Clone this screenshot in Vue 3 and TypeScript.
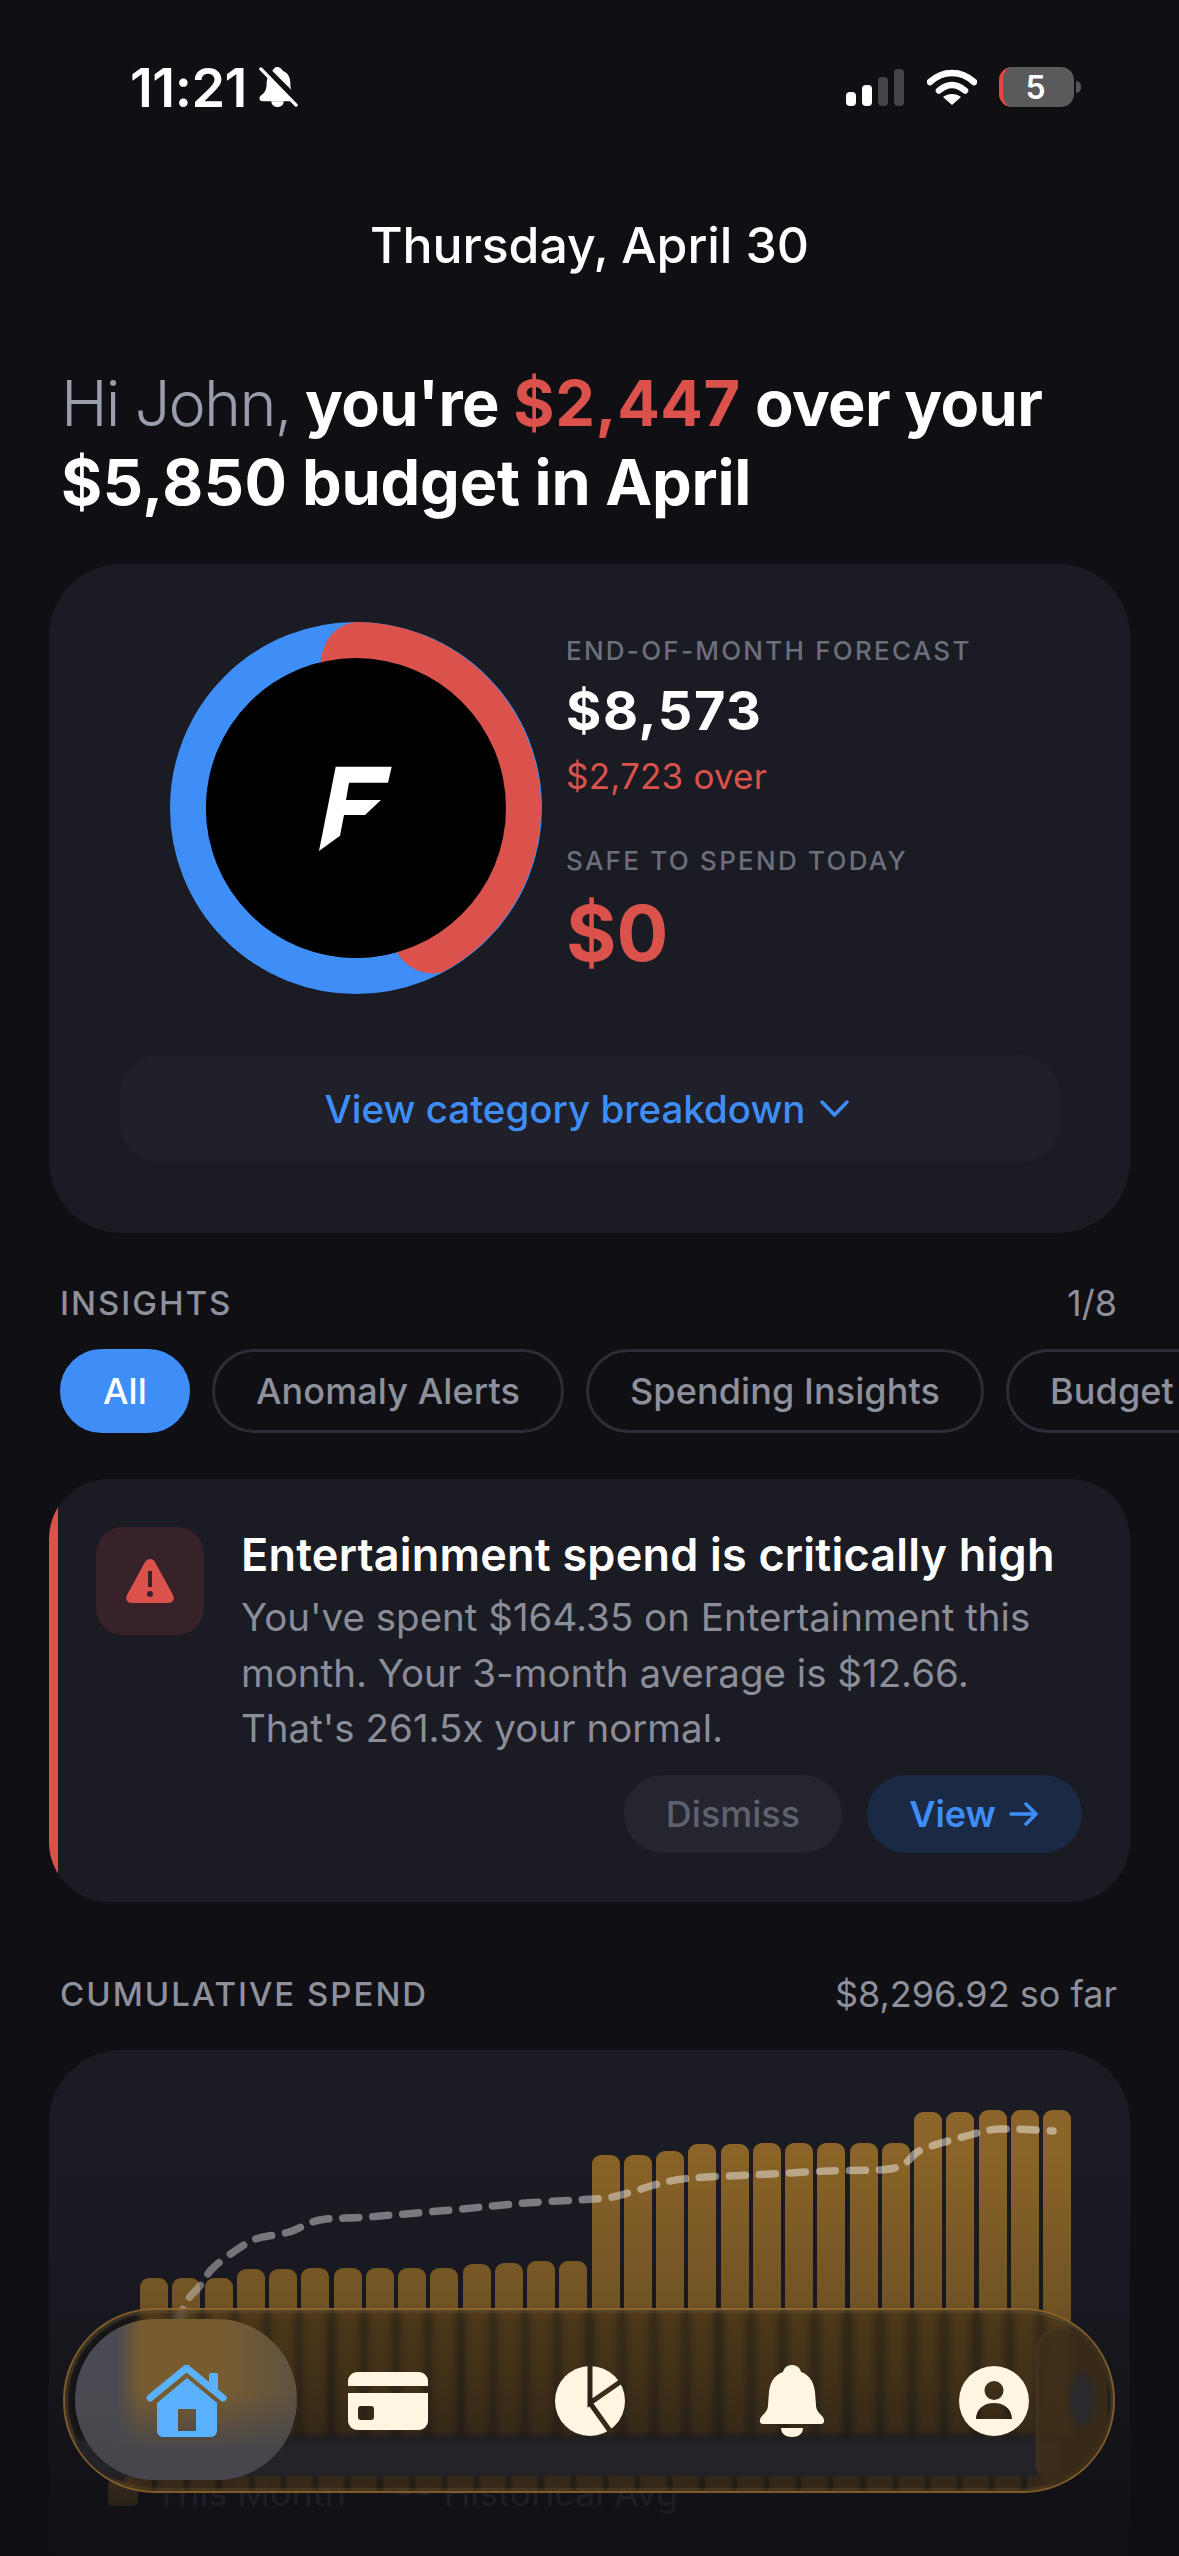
<template>
  <div class="page">
    <header class="status">
      <div class="status-left">
        <span class="time">11:21</span>
        <svg class="mute" width="40" height="44" viewBox="0 0 42 44">
          <path d="M20 1c3 0 5 2 6 4 7 3 8 9 8 14 0 6 2 9 5 12 3 2 2 6-1 6H5c-3 0-5-3-2-6 4-3 6-6 6-12 0-5 2-11 6-14 1-2 3-4 5-4Z" fill="#fff" />
          <path d="M14 37h13c0 4-3 6-6.500 6S14 41 14 37Z" fill="#fff" />
          <path d="M-2 0 38 40" stroke="#0f0f14" stroke-width="7" transform="translate(4 -3)" />
          <path d="M3 3 40 41" stroke="#fff" stroke-width="3.500" stroke-linecap="round" />
        </svg>
      </div>
      <div class="status-right">
        <div class="signal">
          <i v-for="(bar, n) in signalBars" :key="n" :class="{ off: n > 1 }" :style="{ height: bar + 'px' }"></i>
        </div>
        <svg class="wifi" width="50" height="38" viewBox="0 0 50 38">
          <path d="M3 14C16 2 34 2 47 14" fill="none" stroke="#fff" stroke-width="6.500" stroke-linecap="round" />
          <path d="M12 22.500C20 15 30 15 38 22.500" fill="none" stroke="#fff" stroke-width="6.500" stroke-linecap="round" />
          <path d="M25 37 16 29c5-4 13-4 18 0Z" fill="#fff" />
        </svg>
        <div class="battery"><span>5</span></div>
        <i class="nub"></i>
      </div>
    </header>

    <div class="date">Thursday, April 30</div>

    <h1 class="headline">
      <span class="hi">Hi John,</span> you're <span class="red num">$2,447</span> over your<br /><span class="num">$5,850</span> <span class="tail">budget in April</span>
    </h1>

    <section class="card summary">
      <div class="summary-top">
        <div class="ring">
          <svg width="372" height="372" viewBox="0 0 372 372">
            <circle cx="186" cy="186" r="168" fill="none" stroke="#3f8ef8" stroke-width="36" />
            <path d="M150.600 42.300C152 18 166 2 186.700 0A186 186 0 0 1 273.300 349.700C258 355 236 348 225.900 328.500A148 148 0 0 0 150.600 42.300Z" fill="#db524c" />
            <circle cx="186" cy="186" r="150" fill="#000" />
            <polygon points="165.700,144.700 221.700,144.700 218,160.700 179,160.700 176,178 211,178 195,193 174,193 170,213.700 149,229" fill="#fff" />
          </svg>
        </div>
        <div class="figures">
          <div class="label">END-OF-MONTH FORECAST</div>
          <div class="forecast">$8,573</div>
          <div class="over">$2,723 over</div>
          <div class="label safe">SAFE TO SPEND TODAY</div>
          <div class="zero">$0</div>
        </div>
      </div>
      <div class="breakdown">
        <span>View category breakdown</span>
        <svg width="29" height="17" viewBox="0 0 29 17"><path d="M2 2l12.500 13L27 2" fill="none" stroke="#3f8ef8" stroke-width="3.500" stroke-linecap="round" stroke-linejoin="round" /></svg>
      </div>
    </section>

    <div class="section-head insights-head">
      <span class="section-title">INSIGHTS</span>
      <span class="section-side">1/8</span>
    </div>

    <div class="pills">
      <span v-for="(pill, n) in pills" :key="pill" class="pill" :class="{ active: n === 0 }">{{ pill }}</span>
    </div>

    <section class="card insight">
      <div class="insight-row">
        <div class="alert-box">
          <svg width="48" height="44" viewBox="0 0 48 44">
            <path fill-rule="evenodd" fill="#db524c" d="M24 0c2 0 4 1 5 3l18 33c2 4 0 8-5 8H6c-5 0-7-4-5-8L19 3c1-2 3-3 5-3ZM22 12v16h4V12ZM24 32a3 3 0 1 0 0 6 3 3 0 0 0 0-6Z" />
          </svg>
        </div>
        <div class="insight-copy">
          <div class="insight-title">Entertainment spend is critically high</div>
          <p class="insight-text">You've spent $164.35 on Entertainment this<br />month. Your 3-month average is $12.66.<br />That's 261.5x your normal.</p>
        </div>
      </div>
      <div class="insight-actions">
        <span class="btn dismiss">Dismiss</span>
        <span class="btn view">View
          <svg width="32" height="24" viewBox="0 0 32 24"><path d="M3 12h25M18 2l10 10-10 10" fill="none" stroke="#3f8ef8" stroke-width="3.500" stroke-linecap="round" stroke-linejoin="round" /></svg>
        </span>
      </div>
    </section>

    <div class="section-head spend-head">
      <span class="section-title">CUMULATIVE SPEND</span>
      <span class="section-side">$8,296.92 so far</span>
    </div>

    <section class="card chart">
      <div class="bars">
        <i v-for="(top, n) in barTops" :key="n" class="bar" :style="{ height: 2438 - top + 'px' }"></i>
      </div>
      <svg class="avg-line" width="1081" height="440" viewBox="0 0 1081 440">
        <path :d="avgPath" fill="none" stroke="#fff" stroke-opacity="0.46" stroke-width="7.500" stroke-linecap="round" stroke-dasharray="16 14" />
      </svg>
      <div class="legend">
        <i class="swatch"></i><span>This Month</span>
        <i class="dash"></i><i class="dash second"></i><span>Historical Avg</span>
      </div>
      <div class="axis">
        <span v-for="tick in ticks" :key="tick">{{ tick }}</span>
      </div>
    </section>

    <div class="fade"></div>

    <nav class="tabbar">
      <i class="band"></i>
      <i class="stripes"></i>
      <i class="lens"><b></b></i>
      <i class="active-pill"></i>
      <div class="tab">
        <svg width="81" height="72" viewBox="0 0 81 72">
          <path d="M4 33 40.500 3 77 33" fill="none" stroke="#5ab2ff" stroke-width="7" stroke-linecap="round" stroke-linejoin="round" />
          <rect x="63" y="8" width="9" height="17" rx="2" fill="#5ab2ff" />
          <path fill-rule="evenodd" fill="#5ab2ff" d="M41 13 11 38v28a6 6 0 0 0 6 6h48a6 6 0 0 0 6-6V38ZM32 44h18v22H32Z" />
        </svg>
      </div>
      <div class="tab">
        <svg width="80" height="58" viewBox="0 0 80 58">
          <path fill-rule="evenodd" fill="#fff5e0" d="M0 14V9a9 9 0 0 1 9-9h62a9 9 0 0 1 9 9v5ZM0 21h80v28a9 9 0 0 1-9 9H9a9 9 0 0 1-9-9ZM13 34a3 3 0 0 0-3 3v8a3 3 0 0 0 3 3h10a3 3 0 0 0 3-3v-8a3 3 0 0 0-3-3Z" />
        </svg>
      </div>
      <div class="tab">
        <svg width="70" height="70" viewBox="0 0 70 70">
          <mask id="pie-cuts">
            <rect width="70" height="70" fill="#fff" />
            <path d="M35 -2V37L68 14M35 37 60 72" fill="none" stroke="#000" stroke-width="5" />
          </mask>
          <circle cx="35" cy="35" r="35" fill="#fff5e0" mask="url(#pie-cuts)" />
        </svg>
      </div>
      <div class="tab">
        <svg width="66" height="72" viewBox="0 0 66 72">
          <path fill="#fff5e0" d="M33 0C38 0 41 3 42 7 51 10 55 18 56 27L57 40C57 45 60 48 63 51 66 54 66 59 62 59H4C0 59 0 54 3 51 6 48 9 45 9 40L10 27C11 18 15 10 24 7 25 3 28 0 33 0Z" />
          <path fill="#fff5e0" d="M22 63H44C44 69 39 72 33 72 27 72 22 69 22 63Z" />
        </svg>
      </div>
      <div class="tab">
        <svg width="70" height="70" viewBox="0 0 70 70">
          <path fill-rule="evenodd" fill="#fff5e0" d="M35 0a35 35 0 1 0 0 70 35 35 0 0 0 0-70ZM35 15a9.500 9.500 0 1 1 0 19 9.500 9.500 0 0 1 0-19ZM17 53C17 43 25 37 35 37S53 43 53 53Z" />
        </svg>
      </div>
    </nav>
  </div>
</template>

<script setup lang="ts">
const signalBars = [14, 21, 29, 37]
const pills = ['All', 'Anomaly Alerts', 'Spending Insights', 'Budget Alerts']
const ticks = ['1', '5', '10', '15', '20', '30']

// top edge of each day's bar, in page pixels
const barTops = [
  2278, 2278, 2278, 2269, 2269, 2268, 2268, 2268, 2268, 2268, 2264, 2263, 2261, 2261, 2155,
  2155, 2151, 2144, 2144, 2143, 2143, 2143, 2143, 2143, 2112, 2112, 2110, 2110, 2110
]

// historical average, page pixels
const avgPoints: [number, number][] = [
  [154, 2380], [184, 2307], [199, 2287], [214, 2267], [244, 2245], [259, 2238], [289, 2232],
  [320, 2220], [368, 2217], [451, 2210], [526, 2203], [594, 2199], [617, 2196], [662, 2183],
  [692, 2178], [752, 2175], [827, 2171], [895, 2168], [921, 2150], [970, 2135], [1000, 2129],
  [1053, 2131]
]

const smooth = (pts: [number, number][]) => {
  const local = pts.map(([x, y]) => [x - 49, y - 2050])
  let d = `M${local[0][0]} ${local[0][1]}`
  for (let i = 0; i < local.length - 1; i++) {
    const p0 = local[i - 1] || local[i]
    const p1 = local[i]
    const p2 = local[i + 1]
    const p3 = local[i + 2] || p2
    const c1x = p1[0] + (p2[0] - p0[0]) / 6
    const c1y = p1[1] + (p2[1] - p0[1]) / 6
    const c2x = p2[0] - (p3[0] - p1[0]) / 6
    const c2y = p2[1] - (p3[1] - p1[1]) / 6
    d += ` C${c1x} ${c1y} ${c2x} ${c2y} ${p2[0]} ${p2[1]}`
  }
  return d
}

const avgPath = smooth(avgPoints)
</script>

<style>
html,
body {
  margin: 0;
  background: #0f0f14;
}
</style>

<style scoped>
.page {
  position: relative;
  width: 1179px;
  height: 2556px;
  overflow: hidden;
  background: #0f0f14;
  color: #fff;
  font-family: Inter, "Liberation Sans", sans-serif;
}

.status {
  display: flex;
  justify-content: space-between;
  align-items: center;
  height: 174px;
  padding: 0 98px 0 130px;
}

.status-left {
  display: flex;
  align-items: center;
  gap: 11px;
}

.time {
  font-size: 54px;
  font-weight: 600;
  letter-spacing: -0.500px;
}

.status-right {
  display: flex;
  align-items: center;
}

.signal {
  display: flex;
  align-items: flex-end;
  gap: 6px;
  height: 37px;
  margin-right: 23px;
}

.signal i {
  width: 10px;
  border-radius: 4px;
  background: #fff;
}

.signal i.off {
  background: #444446;
}

.wifi {
  margin-right: 22px;
}

.battery {
  box-sizing: border-box;
  width: 75px;
  height: 40px;
  padding-right: 6px;
  border-radius: 13px;
  border-left: 4px solid #e5463f;
  background: #5a5a5c;
  display: flex;
  align-items: center;
  justify-content: center;
  font-size: 32px;
  font-weight: 600;
}

.nub {
  width: 5px;
  height: 12px;
  margin-left: 2px;
  border-radius: 0 6px 6px 0;
  background: #555557;
}

.date {
  height: 142px;
  line-height: 142px;
  text-align: center;
  font-size: 50px;
  font-weight: 500;
  letter-spacing: -0.100px;
}

.headline {
  margin: 48px 0 0;
  padding-left: 61px;
  font-size: 63px;
  line-height: 79px;
  font-weight: 700;
  letter-spacing: -0.600px;
}

.hi {
  color: #9a9dab;
  font-weight: 300;
  letter-spacing: -1.800px;
}

.num {
  letter-spacing: 0.600px;
}

.tail {
  letter-spacing: -0.200px;
}

.red {
  color: #db524c;
}

.card {
  margin: 0 49px;
  background: #1a1b23;
}

.summary {
  margin-top: 42px;
  height: 669px;
  box-sizing: border-box;
  padding-top: 58px;
  border-radius: 72px;
}

.summary-top {
  display: flex;
  gap: 24px;
  padding-left: 121px;
}

.ring {
  width: 372px;
  height: 372px;
  flex: none;
}

.figures {
  padding-top: 11px;
}

.label {
  font-size: 26px;
  line-height: 36px;
  font-weight: 500;
  letter-spacing: 2.250px;
  color: #6b6e7b;
}

.forecast {
  margin-top: 10px;
  font-size: 54px;
  line-height: 64px;
  font-weight: 700;
  letter-spacing: 1.600px;
}

.over {
  margin-top: 10px;
  font-size: 35px;
  line-height: 46px;
  letter-spacing: 0.200px;
  color: #db524c;
}

.safe {
  margin-top: 44px;
}

.zero {
  margin-top: 14px;
  font-size: 77px;
  line-height: 80px;
  font-weight: 700;
  color: #db524c;
}

.breakdown {
  display: flex;
  align-items: center;
  justify-content: center;
  gap: 15px;
  margin: 61px 70px 0 71px;
  height: 107px;
  padding-right: 6px;
  border-radius: 39px;
  background: #1f2029;
  color: #3f8ef8;
  font-size: 38.500px;
  font-weight: 500;
}

.section-head {
  display: flex;
  justify-content: space-between;
  padding: 0 62px 0 60px;
  line-height: 40px;
}

.insights-head {
  margin-top: 50px;
}

.spend-head {
  margin-top: 72px;
}

.section-title {
  font-size: 33px;
  font-weight: 500;
  letter-spacing: 2px;
  color: #8e909c;
}

.section-side {
  font-size: 36px;
  color: #8e909c;
}

.pills {
  display: flex;
  gap: 22px;
  margin-top: 26px;
  padding-left: 60px;
}

.pill {
  flex: none;
  box-sizing: border-box;
  height: 84px;
  padding: 0 41px;
  border: 3px solid #2c2d35;
  border-radius: 42px;
  display: flex;
  align-items: center;
  font-size: 36px;
  font-weight: 500;
  letter-spacing: 0.100px;
  color: #8e909c;
}

.pill.active {
  border-color: #3f8ef8;
  background: #3f8ef8;
  color: #fff;
  padding: 0 40px;
}

.insight {
  position: relative;
  overflow: hidden;
  margin-top: 46px;
  height: 423px;
  box-sizing: border-box;
  padding: 48px 48px 0 47px;
  border-radius: 60px;
}

.insight::before {
  content: "";
  position: absolute;
  left: 0;
  top: 0;
  bottom: 0;
  width: 9px;
  background: #db524c;
}

.insight-row {
  display: flex;
  gap: 37px;
}

.alert-box {
  flex: none;
  width: 108px;
  height: 108px;
  border-radius: 27px;
  background: #38222a;
  display: flex;
  align-items: center;
  justify-content: center;
}

.insight-title {
  font-size: 45px;
  line-height: 56px;
  font-weight: 600;
  letter-spacing: 0.200px;
  white-space: nowrap;
}

.insight-text {
  margin: 7px 0 0;
  font-size: 38.500px;
  line-height: 55.500px;
  color: #8b8d99;
  white-space: nowrap;
}

.insight-actions {
  display: flex;
  justify-content: flex-end;
  gap: 25px;
  margin-top: 18px;
}

.btn {
  height: 78px;
  border-radius: 39px;
  display: flex;
  align-items: center;
  justify-content: center;
  gap: 12px;
  font-size: 36px;
  font-weight: 500;
}

.dismiss {
  width: 218px;
  background: #24252e;
  color: #5f626e;
}

.view {
  width: 215px;
  background: #1a2a44;
  color: #3f8ef8;
  font-weight: 600;
}

.chart {
  position: relative;
  margin-top: 36px;
  height: 620px;
  box-sizing: border-box;
  padding: 60px 59px 0 91px;
  border-radius: 72px;
}

.bars {
  display: flex;
  align-items: flex-end;
  justify-content: space-between;
  height: 328px;
}

.bar {
  width: 28px;
  border-radius: 9px 9px 0 0;
  background: #8a6428;
}

.avg-line {
  position: absolute;
  left: 0;
  top: 0;
}

.legend {
  display: flex;
  align-items: center;
  height: 36px;
  margin: 37px 0 0 -32px;
  font-size: 36px;
  color: #60626e;
}

.swatch {
  width: 30px;
  height: 26px;
  margin-right: 17px;
  border-radius: 5px;
  background: #b0802f;
}

.legend span:nth-of-type(1) {
  margin-right: 52px;
}

.dash {
  width: 12px;
  height: 4px;
  margin-right: 7px;
  background: #60626e;
}

.dash.second {
  margin-right: 15px;
}

.axis {
  display: flex;
  justify-content: space-between;
  margin: 42px -6px 0 -30px;
  font-size: 32px;
  color: #6b6d78;
}

.fade {
  position: absolute;
  left: 0;
  right: 0;
  top: 2150px;
  bottom: 0;
  background: linear-gradient(
    rgba(15, 15, 20, 0) 0,
    rgba(15, 15, 20, 0.2) 150px,
    rgba(15, 15, 20, 0.8) 340px,
    rgba(15, 15, 20, 0.95) 100%
  );
}

.tabbar {
  position: absolute;
  left: 63px;
  top: 2308px;
  box-sizing: border-box;
  width: 1052px;
  height: 185px;
  padding: 0 20px;
  display: flex;
  align-items: center;
  overflow: hidden;
  border: 2px solid rgba(146, 104, 44, 0.85);
  border-radius: 92px;
  background: linear-gradient(rgba(0, 0, 0, 0.3), rgba(0, 0, 0, 0.06));
  box-shadow: inset 0 0 0 3px rgba(96, 82, 58, 0.4), inset 0 0 14px rgba(120, 90, 40, 0.35);
  -webkit-backdrop-filter: blur(4.500px);
  backdrop-filter: blur(4.500px);
}

.band {
  position: absolute;
  left: 10px;
  right: 50px;
  top: 128px;
  height: 40px;
  background: #232328;
  filter: blur(3px);
}

.stripes {
  position: absolute;
  left: 60px;
  right: 60px;
  bottom: 0;
  height: 15px;
  opacity: 0.45;
  background: repeating-linear-gradient(90deg, #5c4119 0 27px, #2c2618 27px 32.200px);
  filter: blur(1.500px);
}

.lens {
  position: absolute;
  right: 5px;
  top: 18px;
  bottom: 6px;
  width: 72px;
  background: rgba(62, 47, 26, 0.85);
  border-radius: 34px 76px 76px 34px;
  box-shadow: inset 2px 2px 0 rgba(110, 92, 62, 0.22);
  filter: blur(1px);
}

.lens b {
  position: absolute;
  left: 34px;
  top: 45px;
  width: 24px;
  height: 52px;
  border-radius: 50%;
  background: #2a2a2f;
  filter: blur(3px);
}

.active-pill {
  position: absolute;
  left: 10px;
  top: 9px;
  width: 222px;
  height: 161px;
  border-radius: 80px;
  background:
    linear-gradient(rgba(70, 70, 76, 0) 45%, #46464c 82%),
    linear-gradient(90deg, #4a4a52 0 42px, #775c30 66px, #775c30 65%, #5f5240 100%);
}

.tab {
  position: relative;
  flex: none;
  width: 202px;
  display: flex;
  justify-content: center;
}
</style>
